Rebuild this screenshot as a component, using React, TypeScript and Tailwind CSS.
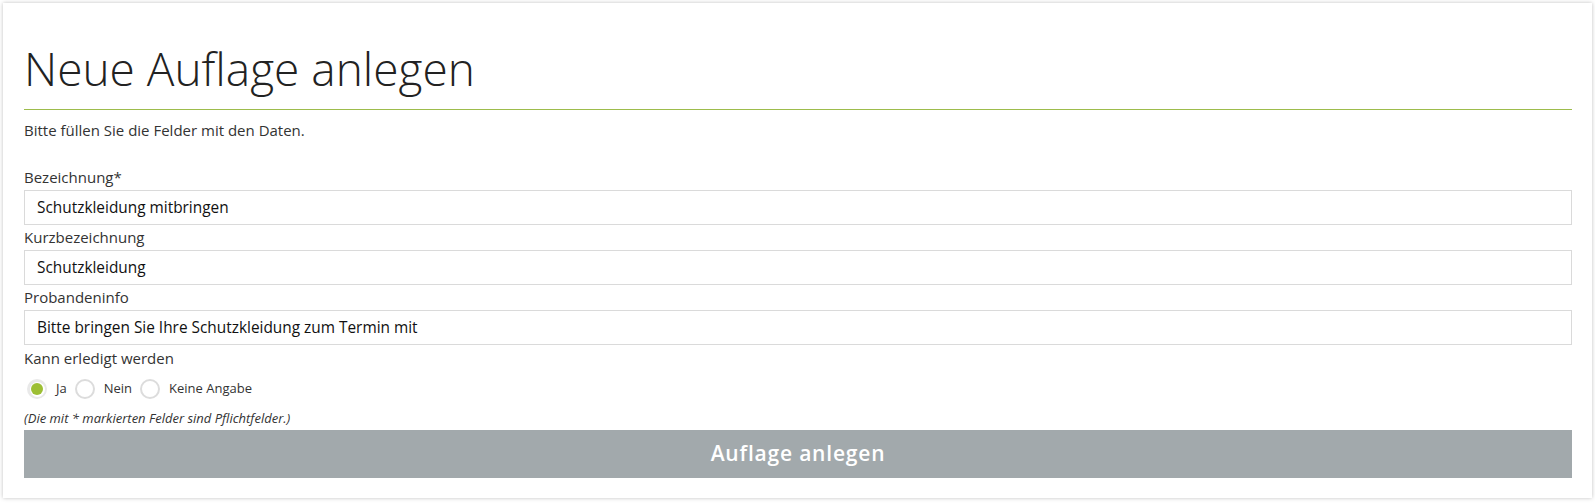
import React from "react";

const font = { fontFamily: '"Open Sans", "Noto Sans", "Liberation Sans", sans-serif' };

function Field({ label, value }: { label: string; value: string }) {
  return (
    <div className="flex flex-col">
      <label className="h-[25px] flex items-center text-[15px] text-[#333]">{label}</label>
      <div className="h-[35px] border border-[#dadada] flex items-center px-[12px] text-[15.4px] text-[#111]">
        {value}
      </div>
    </div>
  );
}

function Radio({ label, checked }: { label: string; checked?: boolean }) {
  return (
    <div className="flex items-center gap-[9px]">
      {checked ? (
        <span className="w-[20px] h-[20px] rounded-full bg-[#e9e9e9] flex items-center justify-center">
          <span className="w-[15px] h-[15px] rounded-full bg-white flex items-center justify-center">
            <span className="w-[12px] h-[12px] rounded-full bg-[#9dbf34]" />
          </span>
        </span>
      ) : (
        <span className="w-[20px] h-[20px] rounded-full border-2 border-[#dcdcdc] bg-white" />
      )}
      <span className="text-[13px] text-[#333]">{label}</span>
    </div>
  );
}

export default function App() {
  return (
    <div className="bg-white w-[1595px] h-[504px] pt-[3px] px-[3px]" style={font}>
      <div className="bg-white shadow-[0_0_4px_rgba(0,0,0,0.25)] pl-[21px] pr-[20px] pt-[36px] pb-[20px]">
        <div className="border-b border-[#9dbc4c] pb-[12px]">
          <h1 className="text-[46px] leading-[58px] font-light text-[#222]">Neue Auflage anlegen</h1>
        </div>
        <p className="mt-[10px] h-[20px] leading-[20px] text-[15px] text-[#333]">
          Bitte füllen Sie die Felder mit den Daten.
        </p>
        <div className="mt-[25px] flex flex-col">
          <Field label="Bezeichnung*" value="Schutzkleidung mitbringen" />
          <Field label="Kurzbezeichnung" value="Schutzkleidung" />
          <Field label="Probandeninfo" value="Bitte bringen Sie Ihre Schutzkleidung zum Termin mit" />
        </div>
        <div className="h-[26px] flex items-center text-[15px] text-[#333]">Kann erledigt werden</div>
        <div className="h-[36px] flex items-center gap-[8px] pl-[3px]">
          <Radio label="Ja" checked />
          <Radio label="Nein" />
          <Radio label="Keine Angabe" />
        </div>
        <div className="h-[23px] flex items-center text-[13px] italic text-[#333]">
          (Die mit * markierten Felder sind Pflichtfelder.)
        </div>
        <button className="w-full h-[48px] bg-[#a2a9ac] text-white font-semibold text-[21px] tracking-[0.8px] flex items-center justify-center">
          Auflage anlegen
        </button>
      </div>
    </div>
  );
}
